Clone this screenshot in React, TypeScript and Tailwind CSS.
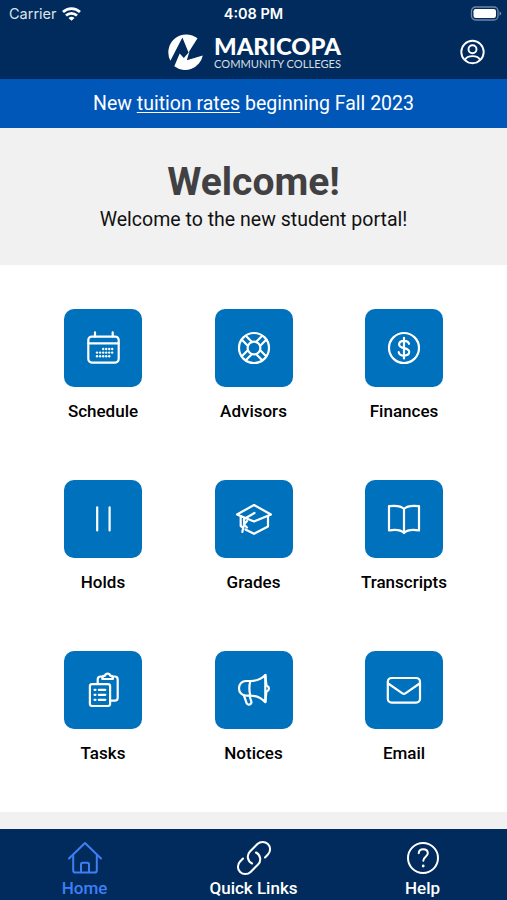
import type { ReactNode } from "react"

interface Tile {
  label: string
  icon: ReactNode
}

// Dots of the calendar icon, row by row
const calendarDots = [
  [20.2, 21], [23.2, 21], [26.2, 21], [29.2, 21],
  [14, 24.6], [17.1, 24.6], [20.2, 24.6], [23.2, 24.6], [26.2, 24.6], [29.2, 24.6],
  [14, 28.2], [17.1, 28.2], [20.2, 28.2], [23.2, 28.2], [26.2, 28.2],
]

const tiles: Tile[] = [
  {
    label: "Schedule",
    icon: (
      <>
        <rect x="5.3" y="8.6" width="30.4" height="26" rx="3.5" />
        <path d="M12 4.4v4M29.7 4.4v4M5.5 15.4h30" />
        {calendarDots.map(([x, y], index) => (
          <circle key={index} cx={x} cy={y} r="1.2" fill="currentColor" stroke="none" />
        ))}
      </>
    ),
  },
  {
    label: "Advisors",
    icon: (
      <>
        <circle cx="20" cy="20" r="15" />
        <circle cx="20" cy="20" r="6.4" />
        {[45, 135, 225, 315].map((angle) => (
          <path key={angle} d="M17.2 14V5.6M22.8 14V5.6" transform={`rotate(${angle} 20 20)`} />
        ))}
      </>
    ),
  },
  {
    label: "Finances",
    icon: (
      <>
        <circle cx="20" cy="20" r="15" />
        <path d="M20 9.8v20.7M25 15.8c-.4-2-2.4-3-5-3-2.9 0-4.9 1.4-4.9 3.6 0 5 10.1 2.3 10.1 7.4 0 2.3-2.2 3.8-5.2 3.8-2.9 0-4.9-1.3-5.3-3.5" />
      </>
    ),
  },
  {
    label: "Holds",
    icon: <path d="M14.2 8.3v23.2M26.6 8.3v23.2" />,
  },
  {
    label: "Grades",
    icon: (
      <>
        <path d="M20 6 37 15.5 20 22.4 3 15.5Z" />
        <path d="M34 17v10.5L20 34.8 11.5 30.5M6.7 17.2V27l1.6 1.2" />
        <path d="M20.5 14 10 20v5.5M10 25.5l3-3.5M10 25.5 8.3 33M10 25.5l3 3" />
      </>
    ),
  },
  {
    label: "Transcripts",
    icon: <path d="M20 10C17 6.8 11.5 6.4 5 7.2V31.5C11.5 30.4 17 31 20 34 23 31 28.5 30.4 35 31.5V7.2C28.5 6.4 23 6.8 20 10ZV33.5" />,
  },
  {
    label: "Tasks",
    icon: (
      <>
        <rect x="6.9" y="14.1" width="20.2" height="21.9" rx="2.2" />
        <path d="M14.7 14V9.5c0-1.8 1.2-3 3-3h1.700M29.8 6.500h1.900c1.800 0 3 1.200 3 3v18.200c0 1.800-1.200 3-3 3h-4.500" />
        <path d="M19.3 8.2c0-1.900 1-2.400 2.700-2.500.4-1.400 1.400-2 2.600-2s2.200.6 2.600 2c1.700.1 2.700.6 2.700 2.500V9H19.300Z" />
        <path d="M11.5 19.8h1M11.5 24.8h1M11.5 29.8h1M15.8 19.8h6.500M15.8 24.8h6.500M15.8 29.8h6.500" />
      </>
    ),
  },
  {
    label: "Notices",
    icon: (
      <>
        <path d="M16.3 11H12c-4 0-7 3.2-7 7.3s3 7.3 7 7.3h4.3M16.3 11c6.5 0 11-1.7 15-6v27.2c-4-4.3-8.5-6.600-15-6.600M16.3 11c-1.200 4.800-1.200 9.800 0 14.600" />
        <path d="M31.5 5c.1 4.500.5 7.500 1 10.500q2.500 1.200 2.500 3t-2.500 3c-.5 3-.9 6-1 10.500M10 25.700l2.400 7c.6 1.700 2 2.200 3.400 1.700 1.300-.5 1.900-1.800 1.400-3.200l-1.500-5" />
      </>
    ),
  },
  {
    label: "Email",
    icon: (
      <>
        <rect x="3.8" y="8" width="32.2" height="24.6" rx="3.8" />
        <path d="M4.2 13.5 18.4 23.3q1.5 1 3 0L35.6 13.5" />
      </>
    ),
  },
]

const tabs = [
  {
    label: "Home",
    active: true,
    icon: (
      <>
        <path d="M2 18.5 18 3 34 18.5" />
        <path d="M6.2 15v15.5c0 1.300.8 2.100 2.100 2.100h19.400c1.300 0 2.100-.8 2.100-2.100V15M14 32.500V24.500c0-1 .7-1.700 1.700-1.700h4.600c1 0 1.700.7 1.700 1.700v8" />
      </>
    ),
  },
  {
    label: "Quick Links",
    active: false,
    icon: (
      <g transform="translate(-1.8 -1.8) scale(1.65)" strokeWidth="1.25">
        <path d="M13.19 8.688a4.5 4.5 0 0 1 1.242 7.244l-4.5 4.5a4.5 4.5 0 0 1-6.364-6.364l1.757-1.757m13.35-.622 1.757-1.757a4.5 4.5 0 0 0-6.364-6.364l-4.5 4.5a4.5 4.5 0 0 0 1.242 7.244" />
      </g>
    ),
  },
  {
    label: "Help",
    active: false,
    icon: (
      <>
        <circle cx="18" cy="18" r="15" />
        <path d="M13.7 13.2c.2-2.500 2-3.900 4.500-3.900 2.600 0 4.600 1.500 4.600 3.900 0 3.600-4.500 3.600-4.500 7.600" />
        <circle cx="18.2" cy="26" r="1.4" fill="currentColor" stroke="none" />
      </>
    ),
  },
]

function Logo() {
  return (
    <div className="flex items-center">
      <svg className="h-[38px] w-[38px]" viewBox="0 0 38 38" fill="#fff">
        <path d="M4.4 27.8A18 18 0 0 1 31.5 5.3L22.5 19.5 16.4 4.6Z" />
        <path d="M8.3 33.3 13.7 20.5 17.8 25 23.5 18.500 20.8 27.300 36.800 22.500A18 18 0 0 1 8.300 33.300Z" />
      </svg>
      <svg className="ml-[10px] h-[36px] w-[127px] overflow-visible" viewBox="0 0 127 36" fill="#fff">
        <text x="0" y="20.5" fontFamily="Lato" fontWeight="900" fontSize="22.5" textLength="127" lengthAdjust="spacingAndGlyphs">
          MARICOPA
        </text>
        <text x="0" y="34" fontFamily="Lato" fontSize="11.5" fillOpacity="0.85" textLength="127" lengthAdjust="spacingAndGlyphs">
          COMMUNITY COLLEGES
        </text>
      </svg>
    </div>
  )
}

function Header() {
  return (
    <header className="h-[79px] bg-[#002b5c] text-white">
      <div className="grid h-[27px] grid-cols-3 items-center font-[Inter,sans-serif] text-[14px]">
        <div className="flex items-center gap-[5px] pl-[9px] text-[#dbe3ec]">
          <span className="text-[14.5px]">Carrier</span>
          <svg className="h-[14px] w-[19px]" viewBox="0 0 19 14" fill="none" stroke="#fff" strokeWidth="2.7">
            <path d="M1 5a12.2 12.2 0 0 1 17 0M4 8.6a8 8 0 0 1 11 0" />
            <path d="M9.5 13.8 6.5 11a4.500 4.500 0 0 1 6 0Z" fill="#fff" stroke="none" />
          </svg>
        </div>
        <span className="text-center text-[14.5px] font-semibold">4:08 PM</span>
        <svg className="mr-[5px] h-[15px] w-[32px] justify-self-end" viewBox="0 0 32 15">
          <rect x="1.5" y="1" width="26.5" height="13" rx="4" fill="none" stroke="#6f86a3" strokeWidth="1.3" />
          <rect x="3.5" y="3" width="22.5" height="9" rx="2.3" fill="#fff" />
          <path d="M29.5 5.2v4.6q1.8-.8 1.8-2.300t-1.800-2.300" fill="#6f86a3" />
        </svg>
      </div>
      <div className="grid h-[50px] grid-cols-[1fr_auto_1fr] items-center">
        <span />
        <Logo />
        <svg
          className="mr-[22px] h-[26px] w-[26px] justify-self-end"
          viewBox="0 0 26 26"
          fill="none"
          stroke="#fff"
          strokeWidth="1.9"
        >
          <circle cx="13.5" cy="13" r="11.2" />
          <circle cx="13.5" cy="10.2" r="4" />
          <path d="M5.7 21c1.5-2.700 4.500-3.900 7.800-3.900s6.300 1.200 7.800 3.900" />
        </svg>
      </div>
    </header>
  )
}

export default function App() {
  return (
    <div className="flex h-[900px] w-[507px] flex-col overflow-hidden bg-[#f1f1f1] font-[Roboto,sans-serif]">
      <Header />

      {/* Announcement */}
      <div className="flex h-[49px] items-center justify-center bg-[#0057b8] text-[19.5px] text-white">
        <p>
          New <span className="underline decoration-1 underline-offset-2">tuition rates</span> beginning Fall 2023
        </p>
      </div>

      {/* Welcome */}
      <section className="h-[137px] pt-[32px] text-center">
        <h1 className="text-[39px] leading-[44px] font-bold text-[#414042]">Welcome!</h1>
        <p className="text-[19.55px] leading-[32px] text-[#111]">Welcome to the new student portal!</p>
      </section>

      {/* Shortcuts */}
      <main className="grid h-[547px] auto-rows-[171px] grid-cols-[151px_150px_151px] justify-center bg-white pt-[44px]">
        {tiles.map((tile) => (
          <div key={tile.label} className="flex flex-col items-center">
            <div className="flex h-[78px] w-[78px] items-center justify-center rounded-[10px] bg-[#0071bc] text-white">
              <svg
                className="h-10 w-10"
                viewBox="0 0 40 40"
                fill="none"
                stroke="currentColor"
                strokeWidth="2.2"
                strokeLinecap="round"
                strokeLinejoin="round"
              >
                {tile.icon}
              </svg>
            </div>
            <span className="mt-[12px] text-[17px] leading-[24px] font-medium text-black">{tile.label}</span>
          </div>
        ))}
      </main>

      {/* Tab bar */}
      <nav className="mt-[17px] grid h-[71px] grid-cols-3 bg-[#002b5c] pt-[11px]">
        {tabs.map((tab) => (
          <div
            key={tab.label}
            className={`flex flex-col items-center ${tab.active ? "text-[#3f7ff5]" : "text-white"}`}
          >
            <svg
              className="h-9 w-9 shrink-0"
              viewBox="0 0 36 36"
              fill="none"
              stroke="currentColor"
              strokeWidth="2"
              strokeLinecap="round"
              strokeLinejoin="round"
            >
              {tab.icon}
            </svg>
            <span className="text-[17px] leading-[24px] font-medium">{tab.label}</span>
          </div>
        ))}
      </nav>
    </div>
  )
}
